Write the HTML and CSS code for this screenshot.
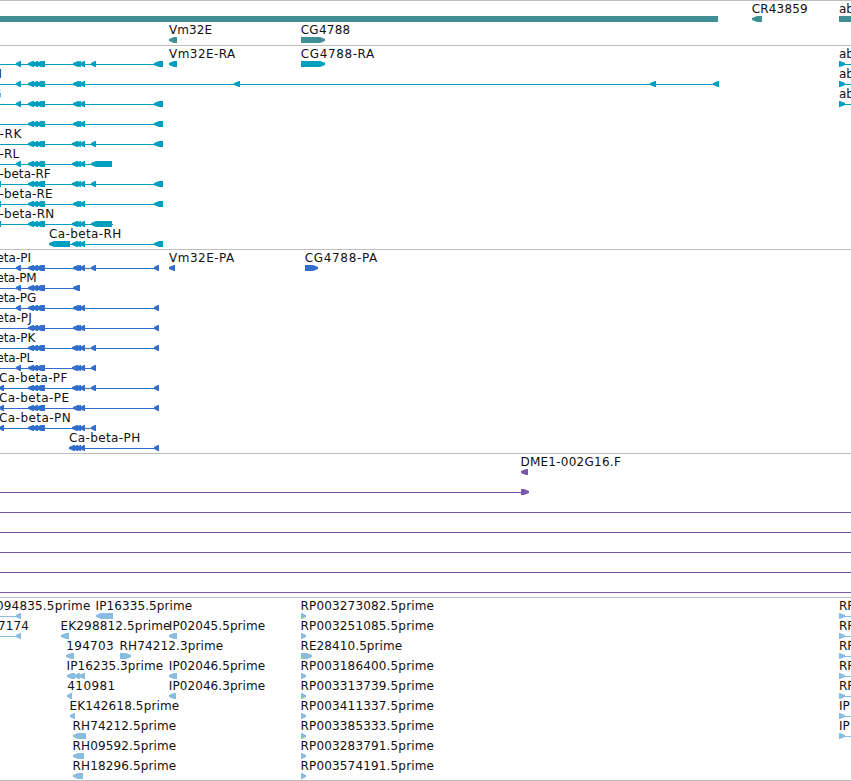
FILE: index.html
```
<!DOCTYPE html>
<html lang="en">
<head>
    <meta charset="utf-8">
    <title>Genome Browser</title>
    <link rel="stylesheet" href="styles.css">
</head>
<body>
    <main class="browser">
        <section class="track genes"><svg id="genes"></svg></section>
        <section class="track transcripts"><svg id="transcripts"></svg></section>
        <section class="track proteins"><svg id="proteins"></svg></section>
        <section class="track clones"><svg id="clones"></svg></section>
        <section class="track ests"><svg id="ests"></svg></section>
    </main>
    <script src="tracks.js"></script>
</body>
</html>
```

FILE: styles.css
```
body {
    margin: 0;
    background-color: #fff;
    font-family: "DejaVu Sans", sans-serif;
    overflow: hidden;
}

.browser {
    display: flex;
    flex-direction: column;
    width: 851px;
    border-bottom: 1px solid #bebebe;
}

.track {
    box-sizing: border-box;
    border-top: 1px solid #bebebe;
    overflow: hidden;
}

.track svg {
    display: block;
    width: 100%;
    height: 100%;
}

.genes {
    height: 45px;
    color: #408f94;
}

.transcripts {
    height: 204px;
    color: #009fc0;
}

.proteins {
    height: 204px;
    color: #326dcc;
}

.clones {
    height: 144px;
    color: #7759ab;
}

.ests {
    height: 183px;
    color: #88bddf;
}

.glyph {
    fill: currentColor;
}

.label {
    fill: #111;
    font-size: 12px;
}
```

FILE: tracks.js
```
const NS = "http://www.w3.org/2000/svg";
const EDGE = 851;

// exon groups shared by most isoforms: [start, end]
const A = [[28, 34], [32, 38], [36, 45]];
const B = [[73, 79], [76, 81], [80, 85]];
const C = [[72, 78], [76, 81], [80, 85]];
const D = [16, 21];
const E = [91, 96];
const F = [154, 163];
const P = [154, 159];

// feature: name, label start, label end, glyph parts, line [from, to], direction
function left(name, x, end, parts, line) {
    return { name, x, end, parts, line, dir: "left" };
}

function right(name, x, end, parts, line) {
    return { name, x, end, parts, line, dir: "right" };
}

function bar(name, x, end, parts) {
    return { name, x, end, parts, dir: "none" };
}

function edge(name) {
    return right(name, 839, 0, [[839, 845]], [839, EDGE]);
}

function rp(name) {
    return right(name, 300.5, 434, [[301, 306]]);
}

const tracks = {
    genes: { step: 21, rows: [
        [bar("", 0, 0, [[0, 718]]), left("CR43859", 751.7, 807.7, [[752, 762]]), bar("abd", 839, 0, [[839, EDGE]])],
        [left("Vm32E", 169, 212, [[169, 177]]), right("CG4788", 300.7, 350.2, [[301, 325]])]
    ] },
    transcripts: { step: 20, rows: [
        [left("", 0, 0, [D, ...A, ...B, E, F], [0, 163]), left("Vm32E-RA", 169, 235.3, [[169, 177]]), right("CG4788-RA", 300.7, 374.3, [[301, 325]]), edge("abd")],
        [left("M", -8.6, 0, [D, ...A, ...B, [234, 240], [650, 656], [713, 719]], [0, 719]), edge("abd")],
        [left("G", -8, 0, [D, ...A, ...B, F], [0, 163]), edge("abd")],
        [left("", 0, 0, [...A, ...B, F], [0, 163])],
        [left("-RK", -0.6, 21.3, [...A, ...C, E, F], [0, 163])],
        [left("-RL", -0.6, 19.3, [D, ...A, ...C, [91, 112]], [0, 112])],
        [left("-beta-RF", -0.6, 50.7, [[-9, 1], ...A, ...C, E, F], [0, 163])],
        [left("-beta-RE", -0.6, 52.7, [[-9, 1], ...A, ...B, F], [0, 163])],
        [left("-beta-RN", -0.6, 54.3, [[-9, 1], ...A, ...C, [91, 112]], [0, 113])],
        [left("Ca-beta-RH", 49, 121.2, [[49, 70], ...C, F], [49, 163])]
    ] },
    proteins: { step: 20, rows: [
        [left("eta-PI", -3.5, 31, [D, ...A, ...B, E, P], [0, 159]), left("Vm32E-PA", 169, 234.3, [[169, 175]]), right("CG4788-PA", 304.7, 377.3, [[305, 318]])],
        [left("eta-PM", -3.5, 36.6, [D, ...A, [73, 80]], [0, 80])],
        [left("eta-PG", -3.5, 36.2, [D, ...A, ...B, P], [0, 159])],
        [left("eta-PJ", -3.5, 31.7, [...A, ...B, P], [0, 159])],
        [left("eta-PK", -3.5, 35.3, [...A, ...C, E, P], [0, 159])],
        [left("eta-PL", -3.5, 33.3, [D, ...A, ...C, E], [0, 96])],
        [left("Ca-beta-PF", -1, 67.3, [[-1, 4], ...A, ...C, E, P], [0, 159])],
        [left("Ca-beta-PE", -1, 69, [[-1, 4], ...A, ...B, P], [0, 159])],
        [left("Ca-beta-PN", -1, 70.7, [[-1, 4], ...A, ...C, E], [0, 96])],
        [left("Ca-beta-PH", 69, 140.2, [[69, 75], [73, 78], [76, 81], [80, 85], P], [69, 159])]
    ] },
    clones: { step: 20, rows: [
        [left("DME1-002G16.F", 520.4, 620.8, [[521, 528]])],
        [right("", 0, 0, [[521, 529]], [0, 528])],
        [bar("", 0, 0, [])],
        [bar("", 0, 0, [])],
        [bar("", 0, 0, [])],
        [bar("", 0, 0, [])],
        [bar("", 0, 0, [])]
    ] },
    ests: { step: 20, rows: [
        [left("094835.5prime", -4, 90.3, [D], [0, 21]), left("IP16335.5prime", 95.5, 192.2, [[96, 113]]), rp("RP003273082.5prime"), edge("RP")],
        [left("7174", -2, 29, [D], [0, 21]), left("EK298812.5prime", 60.5, 170.5, [[61, 69]]), left("IP02045.5prime", 168.8, 265.2, [[169, 177]]), rp("RP003251085.5prime"), edge("RP")],
        [left("194703", 66.3, 113.6, [[66, 74]]), right("RH74212.3prime", 119.5, 223.2, [[120, 131]]), right("RE28410.5prime", 300.5, 402.2, [[301, 312]]), edge("RP")],
        [left("IP16235.3prime", 66.5, 163.2, [[67, 75], [74, 80], [79, 85]]), left("IP02046.5prime", 168.8, 265.2, [[169, 177]]), rp("RP003186400.5prime"), edge("RP")],
        [left("410981", 67.3, 115.2, [[67, 72]]), left("IP02046.3prime", 168.8, 265.2, [[169, 176]]), rp("RP003313739.5prime"), edge("RP")],
        [left("EK142618.5prime", 69.5, 179.2, [[70, 75]]), rp("RP003411337.5prime"), edge("IP")],
        [left("RH74212.5prime", 72.5, 176.2, [[73, 86]]), rp("RP003385333.5prime"), edge("IP")],
        [left("RH09592.5prime", 72.5, 176.2, [[73, 84]]), rp("RP003283791.5prime")],
        [left("RH18296.5prime", 72.5, 176.2, [[73, 83]]), rp("RP003574191.5prime")]
    ] }
};

// plain lines that run across the whole view
tracks.clones.rows.slice(2).forEach(row => row[0].line = [0, EDGE]);

function add(svg, tag, attrs) {
    const el = document.createElementNS(NS, tag);
    for (const key in attrs) {
        el.setAttribute(key, attrs[key]);
    }
    svg.appendChild(el);
    return el;
}

// arrow heads have a blunt tip, so that short exons stay visible
function drawPart(svg, start, end, y, dir) {
    const head = Math.min(5, end - start - 1);
    let points = [[start, y], [end, y], [end, y + 6], [start, y + 6]];
    if (dir === "left") {
        points = [[start, y + 2], [start + head, y], [end, y], [end, y + 6], [start + head, y + 6], [start, y + 4]];
    } else if (dir === "right") {
        points = [[start, y], [end - head, y], [end, y + 2], [end, y + 4], [end - head, y + 6], [start, y + 6]];
    }
    add(svg, "polygon", { class: "glyph", points: points.join(" ") });
}

for (const id in tracks) {
    const svg = document.getElementById(id);
    tracks[id].rows.forEach((row, i) => {
        const y = 15 + i * tracks[id].step;
        row.forEach(f => {
            if (f.line) {
                add(svg, "rect", { class: "glyph", x: f.line[0], y: y + 3, width: f.line[1] - f.line[0], height: 1 });
            }
            f.parts.forEach(([start, end]) => drawPart(svg, start, end, y, f.dir));
            if (f.name) {
                const text = add(svg, "text", { class: "label", x: f.x, y: y - 3 });
                if (f.end) {
                    text.setAttribute("textLength", f.end - f.x);
                }
                text.textContent = f.name;
            }
        });
    });
}
```
